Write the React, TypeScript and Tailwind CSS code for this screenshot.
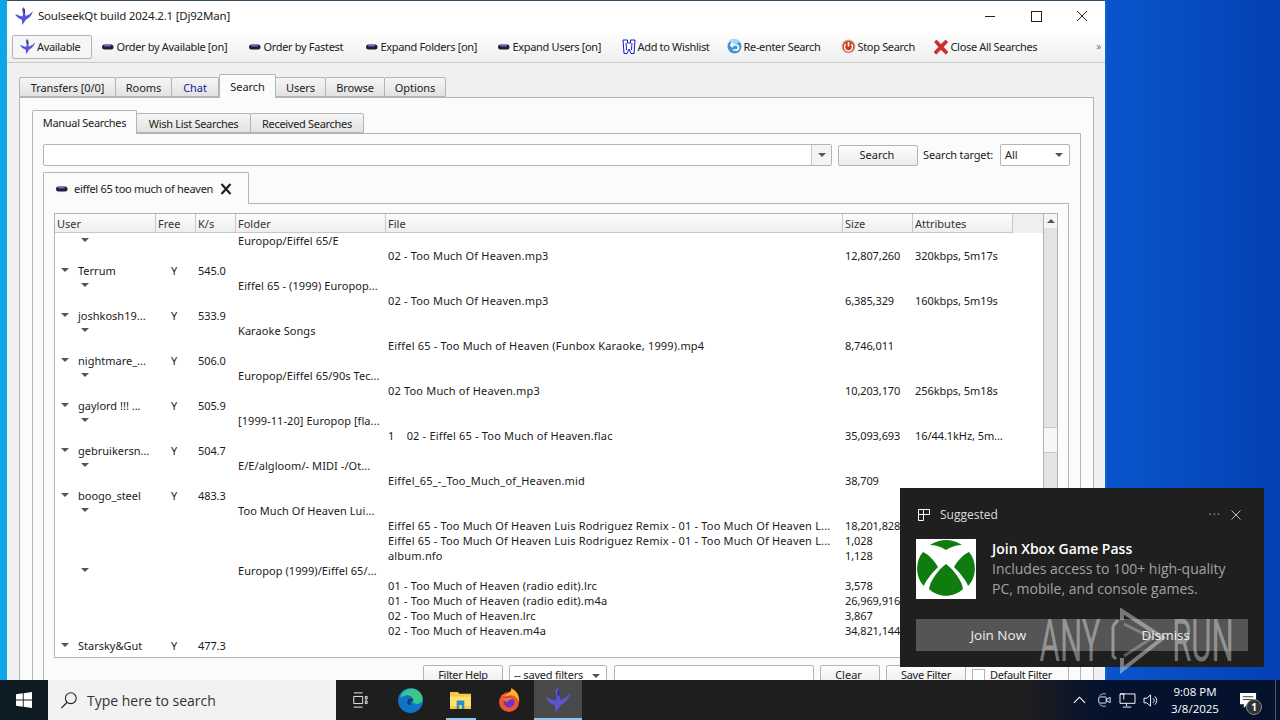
import React from "react";

const Bird = ({ className = "" }: { className?: string }) => (
  <svg viewBox="0 0 20 20" className={className}>
    <path d="M1 8 C4 9 6 10 8.500 10.500 L9 7.500 L8 3 L10 1 L11 6 L11.500 10 C14 9.500 17 7.500 19 5 C18 9 15 12.500 12 13.500 C11 15 10 17 8 19 C8.500 16 8 15 7.500 13.500 C5 13 2.500 11 1 8 Z" fill="#5a55d6" />
    <path d="M9.500 3.500 L11 3 L11 7 L9.800 7 Z" fill="#2c2a8f" />
  </svg>
);

const Pill = () => (
  <svg viewBox="0 0 14 10" className="w-[14px] h-[10px] shrink-0">
    <ellipse cx="7" cy="5.500" rx="6.500" ry="3.500" fill="#fdf7c8" />
    <rect x="1" y="2.500" width="11.500" height="5" rx="2.500" fill="#1b1d4e" />
    <rect x="3" y="3" width="7" height="1.500" rx="0.700" fill="#6a70c0" />
  </svg>
);

const WishIcon = () => (
  <svg viewBox="0 0 14 16" className="w-[14px] h-[16px] shrink-0">
    <path d="M1 1 H5.500 V4 H8.500 V1 H13 L12 14.500 H9 L7 10 L5 14.500 H2 Z" fill="#fff" stroke="#1518b8" strokeWidth="1" />
    <path d="M4 4 L4.500 11 M10 4 L9.500 11" stroke="#1518b8" strokeWidth="1" />
  </svg>
);
const ReenterIcon = () => (
  <svg viewBox="0 0 15 15" className="w-[15px] h-[15px] shrink-0">
    <circle cx="7.500" cy="7.500" r="7" fill="#3f95d8" />
    <path d="M2 2 A7 7 0 0 1 13 3 L7 6 Z" fill="#a5d5f2" />
    <path d="M3.500 6 H9 A2.500 2.500 0 0 1 9 11 H6 M3.500 6 L6 3.800 M3.500 6 L6 8.200" fill="none" stroke="#fff" strokeWidth="1.700" />
  </svg>
);
const StopIcon = () => (
  <svg viewBox="0 0 15 15" className="w-[15px] h-[15px] shrink-0">
    <circle cx="7.500" cy="7.500" r="7" fill="#c9b5a0" />
    <circle cx="7.500" cy="7.500" r="5.800" fill="#cf3a1a" />
    <path d="M4.800 5 A4 4 0 1 0 10.200 5" fill="none" stroke="#fff" strokeWidth="1.400" />
    <path d="M7.500 3 V7.500" stroke="#fff" strokeWidth="1.600" />
  </svg>
);
const CloseIcon = () => (
  <svg viewBox="0 0 16 16" className="w-[16px] h-[16px] shrink-0">
    <path d="M1.500 3 L3.500 1 L8 5.500 L12.500 1 L14.800 3 L10.300 8 L15 13 L12.800 15.300 L8 10.500 L3.200 15.300 L1 13 L5.700 8 Z" fill="#d42c28" stroke="#9e2a2a" strokeWidth="0.600" />
  </svg>
);

const Arrow = ({ className = "" }: { className?: string }) => (
  <svg viewBox="0 0 8 4" className={"w-[8px] h-[4px] " + className}>
    <path d="M0 0 H8 L4 4 Z" fill="#555" />
  </svg>
);

const tool = [
  { t: "Order by Available [on]", w: "w-[147px]", i: <Pill /> },
  { t: "Order by Fastest", w: "w-[117px]", i: <Pill /> },
  { t: "Expand Folders [on]", w: "w-[132px]", i: <Pill /> },
  { t: "Expand Users [on]", w: "w-[125px]", i: <Pill /> },
  { t: "Add to Wishlist", w: "w-[105px]", i: <WishIcon /> },
  { t: "Re-enter Search", w: "w-[114px]", i: <ReenterIcon /> },
  { t: "Stop Search", w: "w-[92px]", i: <StopIcon /> },
  { t: "Close All Searches", w: "w-[110px]", i: <CloseIcon /> },
];

const outerTabs = [
  { t: "Transfers [0/0]", w: "w-[97px]" },
  { t: "Rooms", w: "w-[57px]" },
  { t: "Chat", w: "w-[48px]", c: "text-[#1a1a9c]" },
  { t: "Search", w: "w-[57px]", a: true },
  { t: "Users", w: "w-[51px]" },
  { t: "Browse", w: "w-[60px]" },
  { t: "Options", w: "w-[62px]" },
];
const innerTabs = [
  { t: "Manual Searches", w: "w-[105px]", a: true },
  { t: "Wish List Searches", w: "w-[115px]" },
  { t: "Received Searches", w: "w-[114px]" },
];

const Tab = ({ t, w, a, c, x }: { t: string; w: string; a?: boolean; c?: string; x: string }) => (
  <div
    className={
      w +
      " flex items-center justify-center border border-[#b4b4b4] rounded-t-[2px] " +
      x +
      " " +
      (a
        ? "h-[24px] pt-px border-b-0 bg-[#fbfbfb] "
        : "h-[20px] pt-[2px] mb-px bg-gradient-to-b from-[#f6f6f6] to-[#e2e2e2] -ml-px first:ml-0 ") +
      (c || "text-[#222]")
    }
  >
    {t}
  </div>
);

type R = { u?: string; y?: string; k?: string; a1?: boolean; a2?: boolean; d?: string; f?: string; s?: string; at?: string };
const L1 = "Eiffel 65 - Too Much Of Heaven Luis Rodriguez Remix - 01 - Too Much Of Heaven L...";
const rows: R[] = [
  { a2: true, d: "Europop/Eiffel 65/E" },
  { f: "02 - Too Much Of Heaven.mp3", s: "12,807,260", at: "320kbps, 5m17s" },
  { a1: true, u: "Terrum", y: "Y", k: "545.0" },
  { a2: true, d: "Eiffel 65 - (1999) Europop..." },
  { f: "02 - Too Much Of Heaven.mp3", s: "6,385,329", at: "160kbps, 5m19s" },
  { a1: true, u: "joshkosh19...", y: "Y", k: "533.9" },
  { a2: true, d: "Karaoke Songs" },
  { f: "Eiffel 65 - Too Much of Heaven (Funbox Karaoke, 1999).mp4", s: "8,746,011" },
  { a1: true, u: "nightmare_...", y: "Y", k: "506.0" },
  { a2: true, d: "Europop/Eiffel 65/90s Tec..." },
  { f: "02 Too Much of Heaven.mp3", s: "10,203,170", at: "256kbps, 5m18s" },
  { a1: true, u: "gaylord !!! ...", y: "Y", k: "505.9" },
  { a2: true, d: "[1999-11-20] Europop [fla..." },
  { f: "1    02 - Eiffel 65 - Too Much of Heaven.flac", s: "35,093,693", at: "16/44.1kHz, 5m..." },
  { a1: true, u: "gebruikersn...", y: "Y", k: "504.7" },
  { a2: true, d: "E/E/algloom/- MIDI -/Ot..." },
  { f: "Eiffel_65_-_Too_Much_of_Heaven.mid", s: "38,709" },
  { a1: true, u: "boogo_steel", y: "Y", k: "483.3" },
  { a2: true, d: "Too Much Of Heaven Lui..." },
  { f: L1, s: "18,201,828" },
  { f: L1, s: "1,028" },
  { f: "album.nfo", s: "1,128" },
  { a2: true, d: "Europop (1999)/Eiffel 65/..." },
  { f: "01 - Too Much of Heaven (radio edit).lrc", s: "3,578" },
  { f: "01 - Too Much of Heaven (radio edit).m4a", s: "26,969,916" },
  { f: "02 - Too Much of Heaven.lrc", s: "3,867" },
  { f: "02 - Too Much of Heaven.m4a", s: "34,821,144" },
  { a1: true, u: "Starsky&Gut", y: "Y", k: "477.3" },
  { a2: true, d: "1999 - Europop (Eiffel 65/..." },
];

const heads = [
  { t: "User", w: "w-[101px]" },
  { t: "Free", w: "w-[40px]" },
  { t: "K/s", w: "w-[40px]" },
  { t: "Folder", w: "w-[150px]" },
  { t: "File", w: "w-[457px]" },
  { t: "Size", w: "w-[70px]" },
  { t: "Attributes", w: "w-[100px]" },
];

const Row = ({ r }: { r: R }) => (
  <div className="flex h-[15px] leading-[15px] text-[#1a1a1a] whitespace-pre">
    <div className="w-[101px] flex items-center shrink-0">
      {r.a1 ? <Arrow className="ml-[6px] mb-[2px]" /> : r.a2 ? <Arrow className="ml-[26px] mb-[2px]" /> : null}
      {r.u && <span className="ml-[9px]">{r.u}</span>}
    </div>
    <div className="w-[40px] shrink-0 pl-[15px]">{r.y}</div>
    <div className="w-[40px] shrink-0 pl-[2px] tracking-[-0.1px]">{r.k}</div>
    <div className="w-[150px] shrink-0 pl-[2px] tracking-[0.07px]">{r.d}</div>
    <div className="w-[457px] shrink-0 pl-[2px] tracking-[0.18px]">{r.f}</div>
    <div className="w-[70px] shrink-0 pl-[2px] tracking-[-0.1px]">{r.s}</div>
    <div className="w-[100px] shrink-0 pl-[2px] tracking-[-0.07px]">{r.at}</div>
  </div>
);

const Btn = ({ t, w, x = "" }: { t: string; w: string; x?: string }) => (
  <div className={w + " h-[21px] shrink-0 border border-[#b4b4b4] rounded-[2px] bg-gradient-to-b from-[#fdfdfd] to-[#ececec] flex items-center justify-center text-[#222] " + x}>
    {t}
  </div>
);

const Xbox = () => (
  <svg viewBox="0 0 60 60" className="w-[60px] h-[60px] shrink-0 bg-white">
    <path d="M14 6 Q30 -4 46 6 Q38 6 30 11 Q22 6 14 6 Z" fill="#107c10" />
    <path d="M7 13 C12 15 18 21 22 28 C15 35 9 43 8 47 C-1 38 -1 22 7 13 Z" fill="#107c10" />
    <path d="M53 13 C48 15 42 21 38 28 C45 35 51 43 52 47 C61 38 61 22 53 13 Z" fill="#107c10" />
    <path d="M30 25 C38 31 46 42 47 50 C38 59 22 59 13 50 C14 42 22 31 30 25 Z" fill="#107c10" />
  </svg>
);

export default function App() {
  return (
    <div className="relative w-[1280px] h-[720px] overflow-hidden flex flex-col bg-[linear-gradient(90deg,#0ea5e9_0,#0ea5e9_86%,#0a55cc_86.5%,#0340b4_100%)] font-['Noto_Sans','Liberation_Sans',sans-serif] text-[11px]">
      {/* app window */}
      <div className="flex-1 min-h-0 pl-[7px]">
        <div className="w-[1098px] h-[680px] overflow-hidden bg-[#f0f0f0] flex flex-col border-t border-[#33495c]">
          {/* title */}
          <div className="h-[30px] shrink-0 bg-white flex items-center text-[11.500px] tracking-[-0.2px] text-[#222]">
            <Bird className="w-[20px] h-[20px] ml-[7px]" />
            <span className="ml-[4px]">SoulseekQt build 2024.2.1 [Dj92Man]</span>
            <div className="ml-auto flex items-center">
              <svg viewBox="0 0 46 30" className="w-[46px] h-[30px]"><path d="M18 15.500 H28" stroke="#222" /></svg>
              <svg viewBox="0 0 46 30" className="w-[46px] h-[30px]"><rect x="18.500" y="10.500" width="10" height="10" fill="none" stroke="#222" /></svg>
              <svg viewBox="0 0 46 30" className="w-[46px] h-[30px]"><path d="M18 10 L28 20 M28 10 L18 20" stroke="#222" /></svg>
            </div>
          </div>
          {/* toolbar */}
          <div className="h-[32px] shrink-0 bg-gradient-to-b from-[#ffffff] to-[#efefef] border-b border-[#c8c8c8] flex items-center pl-[5px] tracking-[-0.33px]">
            <div className="w-[80px] h-[24px] border border-[#b4b4b4] rounded-[2px] bg-[#f6f6f6] flex items-center pl-[6px] gap-[1px] text-[#222]">
              <Bird className="w-[17px] h-[17px]" />
              <span className="pt-px">Available</span>
            </div>
            <div className="flex items-center pl-[9px] flex-1">
              {tool.map((x) => (
                <div key={x.t} className={x.w + " flex items-center gap-[1.500px] shrink-0 whitespace-nowrap text-[#222]"}>
                  {x.i}
                  <span className="pt-px">{x.t}</span>
                </div>
              ))}
              <span className="ml-auto mr-[4px] text-[#777] text-[10px]">»</span>
            </div>
          </div>
          {/* body */}
          <div className="pl-[12px] pt-[11px]">
            <div className="flex items-end h-[24px] relative z-10">
              {outerTabs.map((x) => (
                <Tab key={x.t} {...x} x="tracking-[-0.08px]" />
              ))}
            </div>
            <div className="w-[1075px] h-[600px] -mt-px border border-[#b4b4b4] bg-[#fbfbfb] pl-[12px] pt-[12px]">
              <div className="flex items-end h-[24px] relative z-10">
                {innerTabs.map((x) => (
                  <Tab key={x.t} {...x} x="tracking-[-0.3px]" />
                ))}
              </div>
              <div className="w-[1049px] h-[560px] -mt-px border border-[#b4b4b4] bg-[#fbfbfb] pl-[10px] pt-[10px]">
                {/* search row */}
                <div className="flex items-center h-[22px] text-[#222]">
                  <div className="w-[789px] h-[22px] border border-[#b4b4b4] rounded-[2px] bg-white flex justify-end">
                    <div className="w-[20px] border-l border-[#c8c8c8] flex items-center justify-center bg-[#f4f4f4]">
                      <Arrow />
                    </div>
                  </div>
                  <div className="ml-[6px] w-[80px] h-[21px] border border-[#b4b4b4] rounded-[2px] bg-gradient-to-b from-[#fdfdfd] to-[#ececec] flex items-center justify-center pr-[2px]">
                    Search
                  </div>
                  <span className="ml-[5px] w-[77px] whitespace-nowrap tracking-[-0.15px]">Search target:</span>
                  <div className="w-[70px] h-[22px] border border-[#b4b4b4] rounded-[2px] bg-white flex items-center justify-between pl-[4px] pr-[6px]">
                    <span>All</span>
                    <Arrow />
                  </div>
                </div>
                {/* result tab */}
                <div className="mt-[6px] w-[206px] h-[32px] relative z-10 border border-b-0 border-[#b4b4b4] rounded-t-[2px] bg-[#fbfbfb] flex items-center pl-[11px] text-[#222]">
                  <Pill />
                  <span className="ml-[5px] whitespace-nowrap tracking-[-0.29px] pt-px">eiffel 65 too much of heaven</span>
                  <svg viewBox="0 0 12 12" className="w-[12px] h-[12px] ml-[7px]"><path d="M1.500 1 L10.500 11 M10.500 1 L1.500 11" stroke="#222" strokeWidth="2.200" /></svg>
                </div>
                <div className="w-[1026px] h-[500px] -mt-px border border-[#b4b4b4] bg-[#fbfbfb] pl-[10px] pt-[9px]">
                  {/* table */}
                  <div className="w-[1004px] h-[445px] border border-[#b4b4b4] bg-white flex overflow-hidden">
                    <div className="w-[988px] shrink-0">
                      <div className="flex h-[19px] bg-[#efefef]">
                        {heads.map((h) => (
                          <div key={h.t} className={h.w + " shrink-0 h-[19px] pl-[2px] pt-[2px] flex items-center border-r border-b border-[#c8c8c8] bg-gradient-to-b from-[#fcfcfc] to-[#eeeeee] text-[#333]"}>
                            {h.t}
                          </div>
                        ))}
                      </div>
                      {rows.map((r, i) => (
                        <Row key={i} r={r} />
                      ))}
                    </div>
                    <div className="w-[15px] shrink-0 flex flex-col border-x border-[#b4b4b4] bg-[#e3e3e3]">
                      <div className="h-[14px] bg-[#f4f4f4] flex items-center justify-center">
                        <Arrow className="rotate-180" />
                      </div>
                      <div className="h-[199px] shrink-0" />
                      <div className="h-[26px] shrink-0 bg-[#f6f6f6] border-y border-[#c8c8c8]" />
                    </div>
                  </div>
                  {/* filter row */}
                  <div className="flex items-center mt-[7px] pl-[369px] text-[#222]">
                    <Btn t="Filter Help" w="w-[80px]" x="tracking-[-0.3px]" />
                    <div className="ml-[6px] w-[98px] h-[21px] shrink-0 border border-[#b4b4b4] rounded-[2px] bg-white flex items-center justify-between pl-[4px] pr-[6px]">
                      <span className="tracking-[-0.2px]">-- saved filters</span>
                      <Arrow />
                    </div>
                    <div className="ml-[7px] w-[200px] h-[21px] shrink-0 border border-[#b4b4b4] rounded-[2px] bg-white" />
                    <div className="ml-[6px]"><Btn t="Clear" w="w-[60px]" x="pr-[3px]" /></div>
                    <div className="ml-[6px]"><Btn t="Save Filter" w="w-[80px]" x="tracking-[-0.25px]" /></div>
                    <div className="ml-[6px] w-[13px] h-[13px] shrink-0 border border-[#b4b4b4] bg-white" />
                    <span className="ml-[5px] whitespace-nowrap tracking-[-0.35px]">Default Filter</span>
                  </div>
                </div>
              </div>
            </div>
          </div>
        </div>
      </div>

      {/* taskbar */}
      <div className="h-[40px] shrink-0 flex items-center bg-[linear-gradient(90deg,#0c1a22_0,#1e1e1e_30%,#1e1e1e_80%,#04122e_86%,#04122e_100%)] text-white">
        <div className="w-[48px] flex items-center justify-center">
          <svg viewBox="0 0 16 16" className="w-[16px] h-[16px]">
            <path d="M0 2.300 L6.800 1.300 V7.500 H0 Z M7.700 1.200 L16 0 V7.500 H7.700 Z M0 8.500 H6.800 V14.700 L0 13.700 Z M7.700 8.500 H16 V16 L7.700 14.800 Z" fill="#fff" />
          </svg>
        </div>
        <div className="w-[288px] h-[40px] bg-[#f2f2f2] flex items-center pl-[12px] text-[#333]">
          <svg viewBox="0 0 20 20" className="w-[18px] h-[18px]">
            <circle cx="12" cy="8" r="6" fill="none" stroke="#222" strokeWidth="1.200" />
            <path d="M8 12.500 L1.500 19" stroke="#222" strokeWidth="1.400" />
          </svg>
          <span className="ml-[9px] font-['Open_Sans',sans-serif] text-[14px]">Type here to search</span>
        </div>
        <div className="w-[48px] flex items-center justify-center">
          <svg viewBox="0 0 18 18" className="w-[16px] h-[18px]">
            <path d="M2 1 H12 M2 17 H12 M2 5 H12 V13 H2 Z M15 5 H17 V8 H15 Z M15 10 H17 V13 H15 Z" fill="none" stroke="#fff" />
          </svg>
        </div>
        <div className="w-[53px] flex items-center justify-center">
          <svg viewBox="0 0 24 24" className="w-[25px] h-[25px]">
            <circle cx="12" cy="12" r="12" fill="#1173c9" />
            <path d="M2 9 C4 2 11 0 16 1 C22 3 25 9 23 13 C21 16 16 16 14 14 C16 11 13 6 8 7 C6 7.500 3 9 2 9 Z" fill="#39c889" />
            <path d="M9 14 C9 9 14 8.500 15 12 C12 11.500 11 14 13 16 C11 17 9 16 9 14 Z" fill="#0d3f7a" />
          </svg>
        </div>
        <div className="relative w-[47px] h-[40px] flex items-center justify-center">
          <svg viewBox="0 0 24 22" className="w-[23px] h-[21px]">
            <path d="M1 2 H9 L11 4 H23 V20 H1 Z" fill="#f5c842" />
            <rect x="1" y="7" width="22" height="10" fill="#ffdf70" />
            <path d="M8 11 H16 V20 H13.500 V16 H10.500 V20 H8 Z" fill="#2a8fd0" />
          </svg>
          <div className="absolute left-[9px] right-[8px] bottom-0 h-[2px] bg-[#8fc7ef]" />
        </div>
        <div className="w-[50px] flex items-center justify-center">
          <svg viewBox="0 0 24 24" className="w-[24px] h-[26px]">
            <circle cx="12" cy="14" r="10" fill="#f0552a" />
            <path d="M4 7 C7 10 16 3 14 0 C20 3 23 8 22 14 C20 8 15 6 10 8 Z" fill="#ffb21f" />
            <circle cx="12" cy="14" r="5.500" fill="#6a37c9" />
            <path d="M6 12 C9 9 14 9 17 11 C14 11 11 12 10 14 Z" fill="#f9742b" />
          </svg>
        </div>
        <div className="relative w-[48px] h-[40px] bg-[#4a4a4a] flex items-center justify-center">
          <Bird className="w-[28px] h-[28px]" />
          <div className="absolute left-0 right-0 bottom-0 h-[2px] bg-[#8fc7ef]" />
        </div>
        <div className="flex-1" />
        <div className="flex items-center h-[40px]">
          <svg viewBox="0 0 14 8" className="w-[13px] h-[8px] mr-[11px]"><path d="M1 7 L7 1 L13 7" fill="none" stroke="#fff" strokeWidth="1.200" /></svg>
          <svg viewBox="0 0 16 18" className="w-[14px] h-[16px] mr-[8px]">
            <path d="M3 4 A7 7 0 0 1 10 2 M3 14 A7 7 0 0 0 10 16" fill="none" stroke="#ccc" />
            <rect x="2" y="5.500" width="8.500" height="7" rx="1" fill="none" stroke="#fff" />
            <path d="M11 8 L15 6 V12 L11 10 Z" fill="none" stroke="#fff" />
          </svg>
          <svg viewBox="0 0 18 16" className="w-[17px] h-[15px] mr-[7px]">
            <path d="M1 1 H6 M8 1 H17 V11 H1 V1 Z M8 11 V14 M4 15 H13 M5 1 V7" fill="none" stroke="#fff" />
          </svg>
          <svg viewBox="0 0 18 16" className="w-[17px] h-[15px]">
            <path d="M1 5.500 H4 L8 2 V14 L4 10.500 H1 Z" fill="none" stroke="#fff" />
            <path d="M10.500 5.500 A3 3 0 0 1 10.500 10.500 M12.500 3.500 A6 6 0 0 1 12.500 12.500" fill="none" stroke="#fff" />
          </svg>
          <div className="w-[58px] ml-[6px] text-center text-[11.500px] leading-[17px] font-['Open_Sans',sans-serif] whitespace-nowrap">
            <div>9:08 PM</div>
            <div>3/8/2025</div>
          </div>
          <div className="relative w-[48px] h-[40px] flex items-center justify-center">
            <svg viewBox="0 0 18 18" className="w-[17px] h-[17px]">
              <path d="M0 1 H17 V13 H8 L4 17 V13 H0 Z" fill="#fff" />
              <path d="M3 5 H14 M3 8 H14" stroke="#333" />
            </svg>
            <div className="absolute left-[22px] top-[19px] w-[16px] h-[16px] rounded-full bg-[#333] border border-[#888] text-[10px] leading-[14px] text-center font-bold">1</div>
          </div>
          <div className="ml-[3px] w-[5px] h-[40px] border-l border-[#555]" />
        </div>
      </div>

      {/* toast */}
      <div className="absolute left-[900px] top-[488px] w-[364px] h-[179px] bg-[#1f1f1f] px-[16px] text-white font-['Open_Sans',sans-serif]">
        <div className="flex items-center h-[51px] pt-[3px] pl-[2px] text-[12px] text-[#ddd]">
          <svg viewBox="0 0 12 12" className="w-[12px] h-[12px]"><path d="M.5 .5 H5.500 V5.500 H.5 Z M5.500 .5 H11.500 V5.500 H5.500 M.5 5.500 V11.500 H5.500 V5.500" fill="none" stroke="#fff" /></svg>
          <span className="ml-[10px]">Suggested</span>
          <span className="ml-auto mr-[10px] tracking-[1px] text-[#999] leading-[10px]">···</span>
          <svg viewBox="0 0 10 10" className="w-[10px] h-[10px] mr-[7px]"><path d="M.5 .5 L9.500 9.500 M9.500 .5 L.5 9.500" stroke="#bbb" /></svg>
        </div>
        <div className="flex">
          <Xbox />
          <div className="ml-[16px]">
            <div className="text-[14px] font-semibold leading-[20px]">Join Xbox Game Pass</div>
            <div className="text-[14px] leading-[20px] text-[#a2a2a2] whitespace-nowrap">Includes access to 100+ high-quality</div>
            <div className="text-[14px] leading-[20px] text-[#a2a2a2] whitespace-nowrap">PC, mobile, and console games.</div>
          </div>
        </div>
        <div className="flex h-[32px] mt-[20px] bg-[#555555] text-[13.500px] text-[#eee]">
          <div className="flex-1 flex items-center justify-center pr-[3px]">Join Now</div>
          <div className="flex-1 flex items-center justify-center">Dismiss</div>
        </div>
      </div>

      {/* watermark */}
      <div className="absolute left-[1040px] top-[608px] h-[66px] flex items-center pointer-events-none text-[#ffffff66] font-['Roboto',sans-serif] text-[60px] leading-none">
        <span className="w-[60px] flex justify-center scale-x-[.52]">ANY</span>
        <svg viewBox="0 0 60 66" className="w-[60px] h-[66px] ml-[8px]">
          <path d="M5 18 V48 L8 51 M10 12 L5 18" fill="none" stroke="#ffffff66" strokeWidth="3" />
          <path d="M14 12 V3 L55 30 L14 62 V50" fill="none" stroke="#ffffff66" strokeWidth="4" />
          <path d="M16 16 L44 30 L16 48" fill="none" stroke="#ffffff44" strokeWidth="3" />
        </svg>
        <span className="w-[62px] ml-[4px] flex justify-center scale-x-[.52]">RUN</span>
      </div>
    </div>
  );
}
